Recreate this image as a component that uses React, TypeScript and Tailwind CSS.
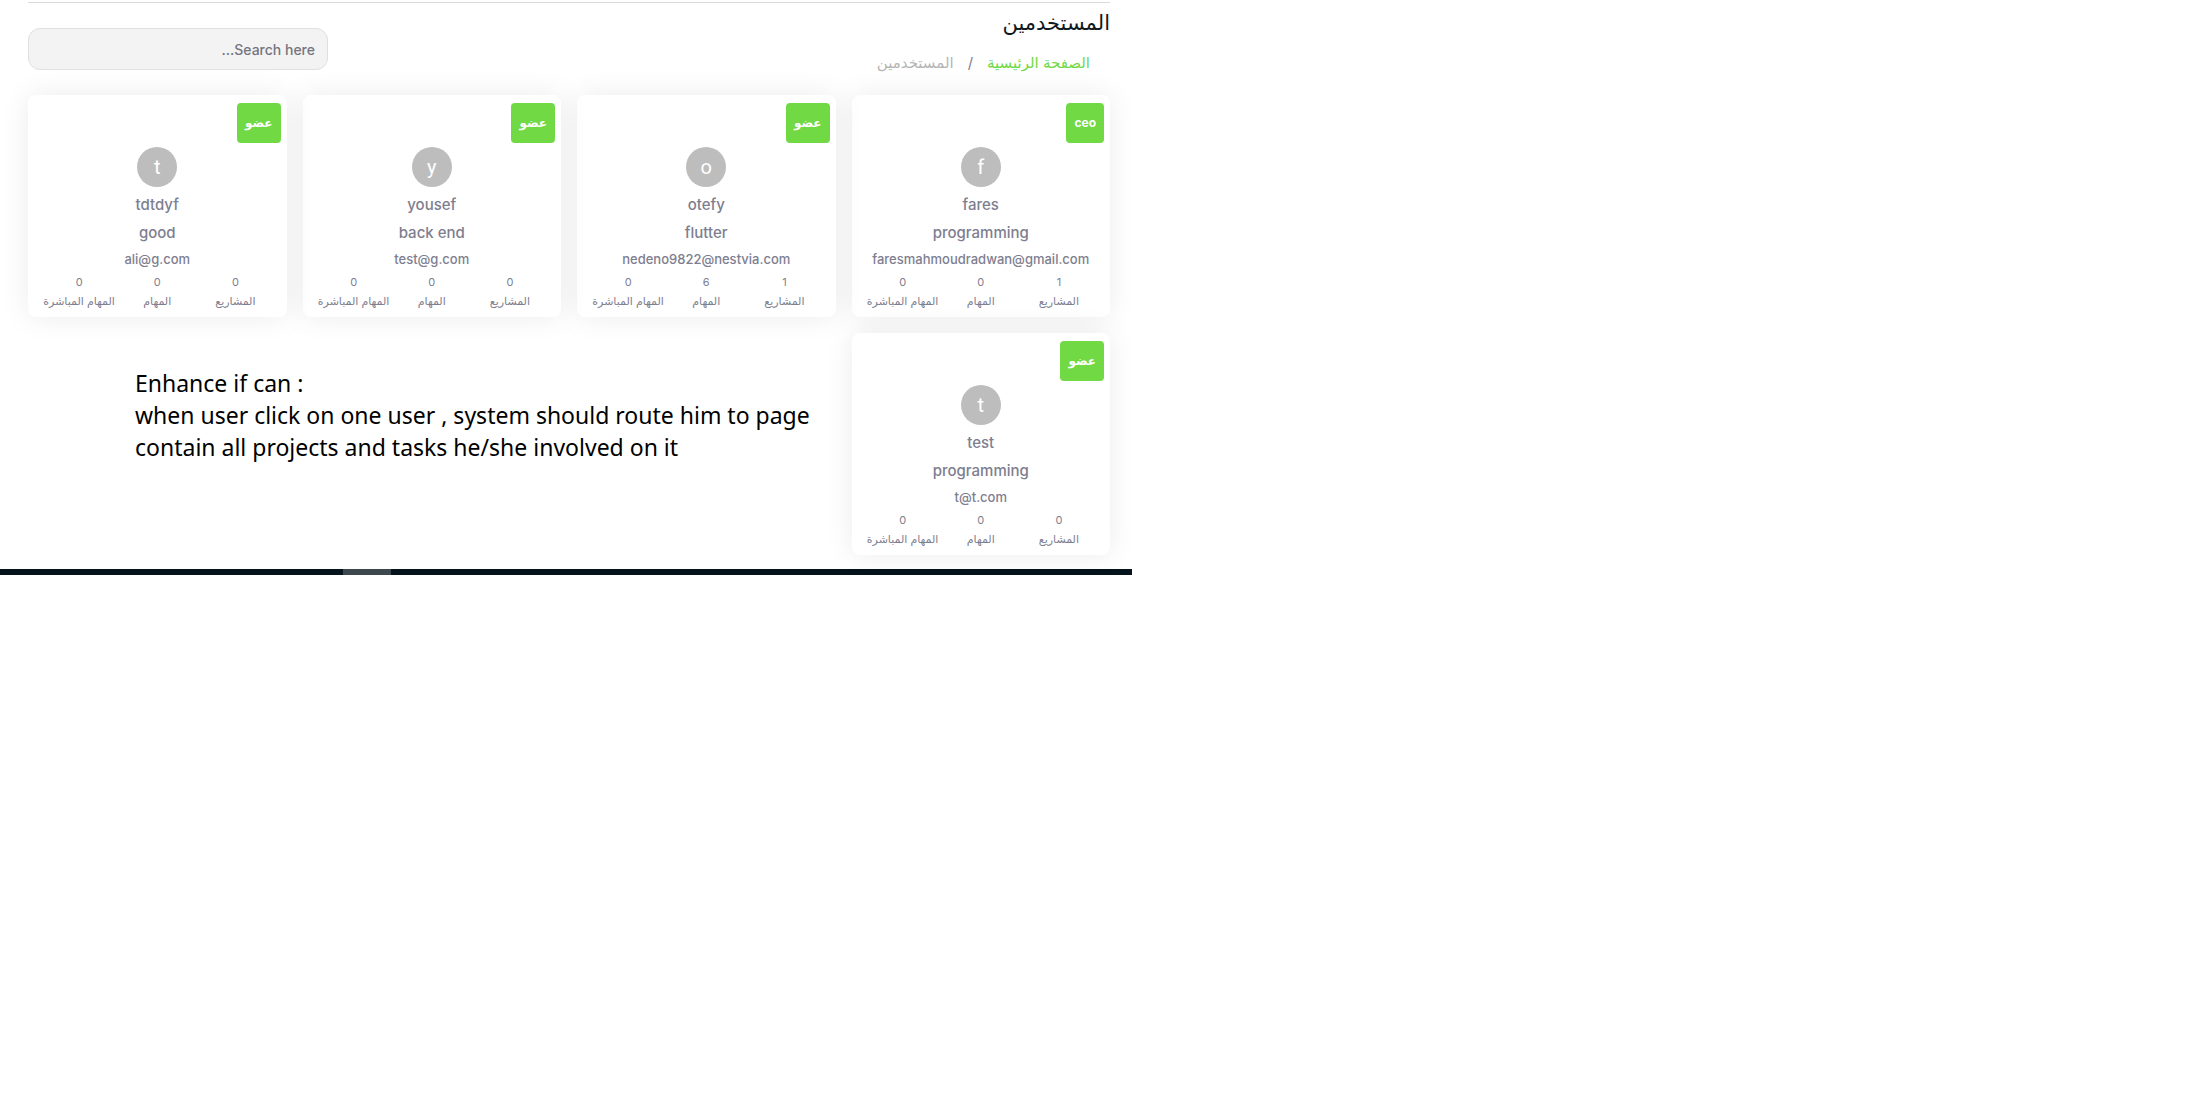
type User = {
  name: string;
  role: string;
  job: string;
  email: string;
  projects: number;
  tasks: number;
  directTasks: number;
};

const users: User[] = [
  { name: "fares", role: "ceo", job: "programming", email: "faresmahmoudradwan@gmail.com", projects: 1, tasks: 0, directTasks: 0 },
  { name: "otefy", role: "عضو", job: "flutter", email: "nedeno9822@nestvia.com", projects: 1, tasks: 6, directTasks: 0 },
  { name: "yousef", role: "عضو", job: "back end", email: "test@g.com", projects: 0, tasks: 0, directTasks: 0 },
  { name: "tdtdyf", role: "عضو", job: "good", email: "ali@g.com", projects: 0, tasks: 0, directTasks: 0 },
  { name: "test", role: "عضو", job: "programming", email: "t@t.com", projects: 0, tasks: 0, directTasks: 0 },
];

function Stat({ value, label }: { value: number; label: string }) {
  return (
    <div className="flex flex-col items-center whitespace-nowrap">
      <dd className="order-1 text-[11px] leading-5">{value}</dd>
      <dt className="order-2 text-[11px] leading-[18px]">{label}</dt>
    </div>
  );
}

function UserCard({ user }: { user: User }) {
  return (
    <article className="flex flex-col rounded-lg bg-white px-3 pt-2 pb-[7px] text-[#7e7e8f] shadow-[0_0_30px_rgba(0,0,0,0.08)]">
      <span className="-mr-1.5 flex h-10 items-center self-start rounded bg-[#70d944] px-2 text-xs font-bold text-white">
        {user.role}
      </span>
      <div className="mt-1 flex size-10 items-center justify-center self-center rounded-full bg-[#bdbdbd] font-['Roboto','Liberation_Sans',sans-serif] text-xl text-white">
        {user.name[0]}
      </div>
      <h2 className="mt-1 text-center text-[15px] leading-7 font-medium">{user.name}</h2>
      <p className="text-center text-[15px] leading-7 font-medium">{user.job}</p>
      <p className="text-center text-[13px] leading-6 font-medium">{user.email}</p>
      <dl className="grid grid-cols-3 pt-px">
        <Stat value={user.projects} label="المشاريع" />
        <Stat value={user.tasks} label="المهام" />
        <Stat value={user.directTasks} label="المهام المباشرة" />
      </dl>
    </article>
  );
}

export default function App() {
  return (
    <div className="min-h-screen bg-white font-['Inter','DejaVu_Sans',sans-serif]">
      <div className="w-full max-w-[1132px] overflow-hidden">
        <main dir="rtl" className="pt-0.5 pr-[22px] pb-3.5 pl-7">
          <hr className="border-[#dadada]" />
          <header className="flex items-start justify-between">
            <div>
              <h1 className="mt-1 text-[21px] leading-8 text-[#101820]">المستخدمين</h1>
              <nav aria-label="breadcrumb" className="mt-2.5 mr-5 flex gap-3.5 text-[15px] leading-7">
                <a href="#home" className="text-[#70d944]">الصفحة الرئيسية</a>
                <span className="text-[#7e7e8f]">/</span>
                <span aria-current="page" className="text-[#b5b5b5]">المستخدمين</span>
              </nav>
            </div>
            <input
              type="search"
              aria-label="Search"
              placeholder="Search here..."
              className="mt-[25px] h-[42px] w-[300px] rounded-xl border border-[#e0e0e0] bg-[#f3f3f3] px-3 text-sm font-medium text-[#757580] placeholder:text-[#757580]"
            />
          </header>
          <section className="mt-[18px] grid grid-cols-4 gap-4">
            {users.map((user) => (
              <UserCard key={user.email} user={user} />
            ))}
            <p dir="ltr" className="col-span-3 mt-[34px] pl-[107px] font-['Noto_Sans',sans-serif] text-[23px] leading-8 text-black">
              Enhance if can :<br />
              when user click on one user , system should route him to page<br />
              contain all projects and tasks he/she involved on it
            </p>
          </section>
        </main>
        <div className="flex h-1.5 bg-[#05141c]">
          <div className="ml-[343px] w-12 bg-[#3c484e]" />
        </div>
      </div>
    </div>
  );
}
